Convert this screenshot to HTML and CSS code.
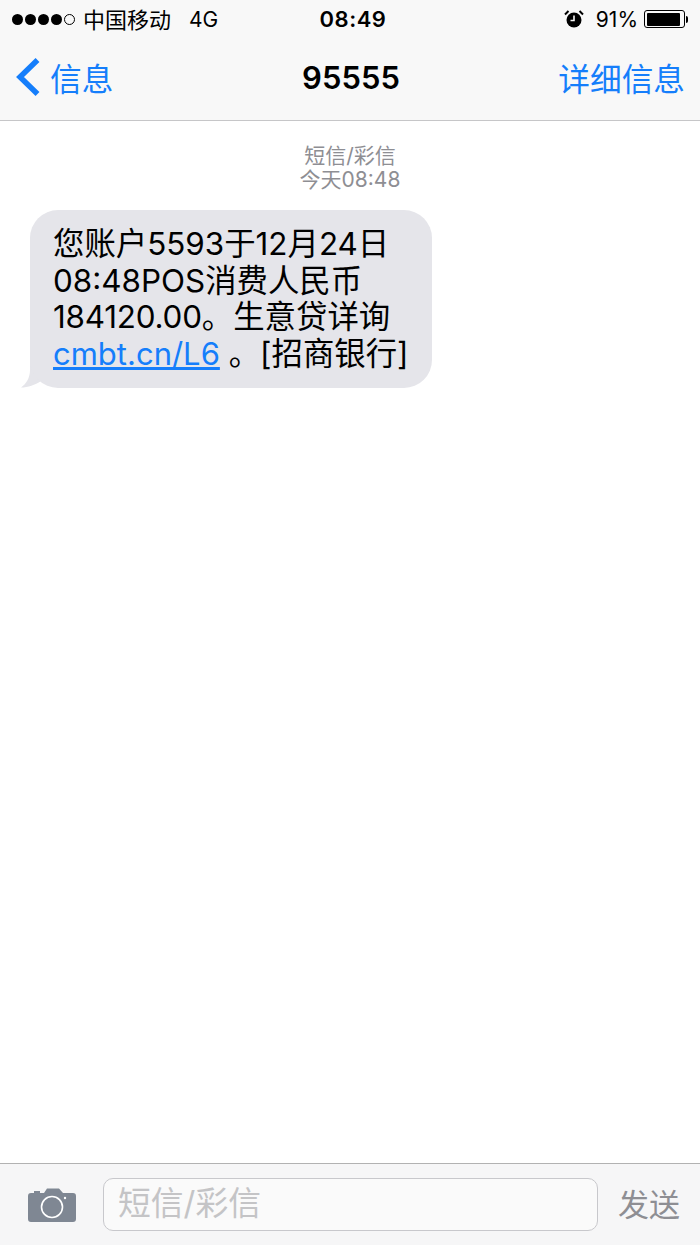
FILE: index.html
```html
<!DOCTYPE html>
<html>
<head>
<meta charset="utf-8">
<link rel="stylesheet" href="styles.css">
</head>
<body>
    <div class="phone">
        <div class="top-bar">
            <div class="status-bar">
                <div class="status-left">
                    <div class="signal">
                        <span class="dot"></span><span class="dot"></span><span class="dot"></span><span class="dot"></span><span class="dot dot-empty"></span>
                    </div>
                    <span class="carrier">中国移动</span>
                    <span class="network">4G</span>
                </div>
                <div class="status-time">08:49</div>
                <div class="status-right">
                    <svg class="alarm" width="20" height="20" viewBox="0 0 20 20">
                        <circle cx="10" cy="11" r="7.5" fill="#000"/>
                        <path d="M10 6.5V11.5H6.5" fill="none" stroke="#f8f8f8" stroke-width="1.6"/>
                        <path d="M1 5.5L4.5 2M19 5.5L15.5 2" stroke="#000" stroke-width="2"/>
                    </svg>
                    <span class="battery-text">91%</span>
                    <div class="battery"><div class="battery-fill"></div></div>
                    <div class="battery-tip"></div>
                </div>
            </div>
            <div class="nav-bar">
                <div class="nav-back">
                    <svg width="26" height="40" viewBox="0 0 26 40">
                        <path d="M22.5 3L5 20L22.5 37" fill="none" stroke="#157efb" stroke-width="5.5"/>
                    </svg>
                    <span>信息</span>
                </div>
                <div class="nav-title">95555</div>
                <div class="nav-detail">详细信息</div>
            </div>
        </div>

        <div class="thread">
            <div class="thread-meta">
                <div>短信/彩信</div>
                <div>今天08:48</div>
            </div>
            <div class="bubble-row">
                <svg class="bubble-tail" width="25" height="30" viewBox="0 0 25 30">
                    <path d="M9 0V12C9 20 5 26 0 29.5C7 29.5 14 27 20 23L25 0Z" fill="#e5e5ea"/>
                </svg>
                <div class="bubble">
                    <div>您账户5593于12月24日</div>
                    <div>08:48POS消费人民币</div>
                    <div><span class="digits">184120.00</span>。生意贷详询</div>
                    <div><a class="link" href="#">cmbt.cn/L6</a> 。[招商银行]</div>
                </div>
            </div>
        </div>

        <div class="bottom-bar">
            <svg class="camera" width="48" height="36" viewBox="0 0 48 36">
                <path d="M3 6H6V4H12V6H16L19 1.5H31L35 6H45A3 3 0 0 1 48 9V32A3 3 0 0 1 45 35H3A3 3 0 0 1 0 32V9A3 3 0 0 1 3 6Z" fill="#7f8793"/>
                <circle cx="24" cy="20" r="10.5" fill="none" stroke="#fff" stroke-width="1.6"/>
                <circle cx="37" cy="11" r="1.2" fill="#fff"/>
            </svg>
            <div class="input-box">短信/彩信</div>
            <div class="send">发送</div>
        </div>
    </div>
</body>
</html>
```

FILE: styles.css
```css
* {
    box-sizing: border-box;
}
html, body {
    margin: 0;
    padding: 0;
    background: #fff;
}
body {
    font-family: Inter, "Noto Sans CJK SC", sans-serif;
    color: #000;
}
.phone {
    width: 700px;
    height: 1245px;
    display: flex;
    flex-direction: column;
    overflow: hidden;
}
.top-bar {
    height: 121px;
    background: #f8f8f8;
    border-bottom: 1px solid #c6c6c8;
}
.status-bar {
    height: 38px;
    display: grid;
    grid-template-columns: 1fr auto 1fr;
    align-items: center;
    padding: 0 12px;
    font-size: 21px;
}
.status-left {
    display: flex;
    align-items: center;
}
.signal {
    display: flex;
    gap: 2px;
    margin-right: 8px;
}
.dot {
    width: 11px;
    height: 11px;
    border-radius: 50%;
    background: #000;
}
.dot-empty {
    background: none;
    border: 1px solid #000;
}
.carrier {
    font-size: 22px;
    margin-bottom: 3px;
}
.network {
    margin-left: 18px;
}
.status-time {
    margin-left: 6px;
    font-weight: 600;
    font-size: 22px;
    letter-spacing: 0.5px;
}
.status-right {
    display: flex;
    align-items: center;
    justify-content: flex-end;
}
.alarm {
    margin-right: 12px;
}
.battery-text {
    margin-right: 6px;
}
.battery {
    width: 41px;
    height: 18px;
    border: 1px solid #000;
    border-radius: 3px;
    padding: 1.5px;
}
.battery-fill {
    width: 92%;
    height: 100%;
    background: #000;
    border-radius: 1px;
}
.battery-tip {
    width: 2px;
    height: 7px;
    margin-left: 1px;
    background: #000;
    border-radius: 0 2px 2px 0;
}
.nav-bar {
    height: 82px;
    display: grid;
    grid-template-columns: 1fr auto 1fr;
    align-items: center;
    padding: 0 15px 4px 15px;
    font-size: 31.7px;
    color: #157efb;
}
.nav-back {
    display: flex;
    align-items: center;
    gap: 9px;
}
.nav-title {
    margin-left: 2px;
    font-size: 31px;
    font-weight: 600;
    color: #000;
}
.nav-detail {
    text-align: right;
}
.thread {
    flex: 1;
    background: #fff;
}
.thread-meta {
    padding-top: 23px;
    text-align: center;
    font-size: 21px;
    line-height: 24px;
    color: #8e8e93;
}
.bubble-row {
    margin-top: 18px;
    margin-left: 30px;
    position: relative;
    width: 402px;
}
.bubble-tail {
    position: absolute;
    left: -9px;
    bottom: 0;
}
.bubble {
    position: relative;
    background: #e5e5ea;
    border-radius: 28px;
    padding: 16px 0 15px 23px;
    height: 178px;
    font-size: 31.4px;
    line-height: 36.5px;
    white-space: nowrap;
}
.digits {
    letter-spacing: -0.2px;
}
.link {
    font-size: 31px;
    color: #157efb;
}
.bottom-bar {
    height: 82px;
    background: #f6f6f7;
    border-top: 1px solid #b2b2b2;
    display: flex;
    align-items: center;
    padding: 0 20px 0 28px;
}
.camera {
    flex: none;
}
.input-box {
    width: 495px;
    height: 53px;
    margin-left: 27px;
    padding-left: 14px;
    background: #fafafa;
    border: 1px solid #c8c8cc;
    border-radius: 10px;
    font-size: 32.8px;
    line-height: 49px;
    color: #c4c4c6;
}
.send {
    margin-left: 20px;
    padding-bottom: 4px;
    font-size: 31px;
    color: #8e8e93;
}
```
